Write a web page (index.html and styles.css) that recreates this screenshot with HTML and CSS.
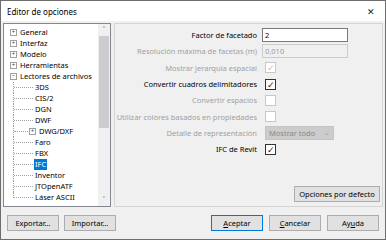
FILE: index.html
```html
<!DOCTYPE html>
<html>
<head>
<meta charset="utf-8">
<link rel="stylesheet" href="styles.css">
</head>
<body>
<div class="window">
  <div class="titlebar">
    <span class="title">Editor de opciones</span>
    <span class="close">✕</span>
  </div>
  <div class="body">
    <div class="main">
      <div class="tree">
        <ul class="items">
          <li class="node"><span class="exp">+</span><span class="lbl">General</span></li>
          <li class="node"><span class="exp">+</span><span class="lbl">Interfaz</span></li>
          <li class="node"><span class="exp">+</span><span class="lbl">Modelo</span></li>
          <li class="node"><span class="exp">+</span><span class="lbl">Herramientas</span></li>
          <li class="node"><span class="exp">−</span><span class="lbl">Lectores de archivos</span></li>
          <li class="leaf"><span class="lbl">3DS</span></li>
          <li class="leaf"><span class="lbl">CIS/2</span></li>
          <li class="leaf"><span class="lbl">DGN</span></li>
          <li class="leaf"><span class="lbl">DWF</span></li>
          <li class="leaf sub"><span class="exp">+</span><span class="lbl">DWG/DXF</span></li>
          <li class="leaf"><span class="lbl">Faro</span></li>
          <li class="leaf"><span class="lbl">FBX</span></li>
          <li class="leaf"><span class="lbl sel">IFC</span></li>
          <li class="leaf"><span class="lbl">Inventor</span></li>
          <li class="leaf"><span class="lbl">JTOpenATF</span></li>
          <li class="leaf"><span class="lbl">Láser ASCII</span></li>
        </ul>
        <div class="scrollbar">
          <span class="arrow">˄</span>
          <div class="thumb"></div>
          <div class="track"></div>
          <span class="arrow">˅</span>
        </div>
      </div>
      <div class="panel">
        <div class="grid">
          <label class="l">Factor de facetado</label>
          <div class="c"><div class="input">2</div></div>
          <label class="l dis">Resolución máxima de facetas (m)</label>
          <div class="c"><div class="input disabled">0,010</div></div>
          <label class="l dis">Mostrar jerarquía espacial</label>
          <div class="c"><span class="cb dis checked">✓</span></div>
          <label class="l">Convertir cuadros delimitadores</label>
          <div class="c"><span class="cb checked">✓</span></div>
          <label class="l dis">Convertir espacios</label>
          <div class="c"><span class="cb dis"></span></div>
          <label class="l dis">Utilizar colores basados en propiedades</label>
          <div class="c"><span class="cb dis"></span></div>
          <label class="l dis">Detalle de representación</label>
          <div class="c"><div class="select">Mostrar todo<span class="caret">⌄</span></div></div>
          <label class="l">IFC de Revit</label>
          <div class="c"><span class="cb checked">✓</span></div>
        </div>
        <div class="panel-foot">
          <button class="btn wide">Opciones por defecto</button>
        </div>
      </div>
    </div>
    <div class="footer">
      <div class="group">
        <button class="btn">Exportar...</button>
        <button class="btn">Importar...</button>
      </div>
      <div class="group right">
        <button class="btn default"><u>A</u>ceptar</button>
        <button class="btn"><u>C</u>ancelar</button>
        <button class="btn">Ay<u>u</u>da</button>
      </div>
    </div>
  </div>
</div>
</body>
</html>
```
FILE: styles.css
```css
* { box-sizing: border-box; }
html, body { margin: 0; padding: 0; }
body {
  width: 386px;
  height: 240px;
  overflow: hidden;
  font-family: "Noto Sans", "Open Sans", sans-serif;
  font-size: 7.5px;
  color: #000;
}
.window {
  width: 386px;
  height: 240px;
  border: 1px solid #6d6d6d;
  display: flex;
  flex-direction: column;
  background: #f0f0f0;
}
.titlebar {
  height: 20px;
  background: #fff;
  display: flex;
  align-items: center;
  justify-content: space-between;
  padding: 0 10px 0 6px;
  flex: none;
}
.title { font-size: 8px; }
.close { font-size: 9px; color: #222; }
.body {
  flex: 1;
  display: flex;
  flex-direction: column;
  padding: 2px 2px 0 2px;
}
.main {
  display: flex;
  gap: 3px;
  height: 184px;
}
.tree {
  width: 108px;
  background: #fff;
  border: 1px solid #828790;
  display: flex;
  overflow: hidden;
}
.items {
  list-style: none;
  margin: 0;
  padding: 3px 0 0 0;
  flex: 1;
}
.items li {
  height: 11px;
  line-height: 11px;
  display: flex;
  align-items: center;
  white-space: nowrap;
  position: relative;
}
.node { padding-left: 6px; }
.exp {
  width: 7px;
  height: 7px;
  border: 1px solid #a0a0a0;
  font-size: 6px;
  line-height: 5px;
  text-align: center;
  color: #444;
  margin-right: 2px;
  background: #fff;
  flex: none;
}
.leaf { padding-left: 30px; }
.leaf::before {
  content: "";
  position: absolute;
  left: 9px;
  top: 0;
  bottom: 0;
  border-left: 1px dotted #a0a0a0;
}
.leaf::after {
  content: "";
  position: absolute;
  left: 10px;
  width: 19px;
  top: 5px;
  border-top: 1px dotted #a0a0a0;
}
.leaf:last-child::before { bottom: 5px; }
.leaf.sub { padding-left: 25px; }
.leaf.sub::after { width: 14px; }
.lbl { padding: 0 1px; }
.lbl.sel { background: #0078d7; color: #fff; }
.scrollbar {
  width: 12px;
  background: #f0f0f0;
  display: flex;
  flex-direction: column;
  flex: none;
}
.arrow {
  height: 12px;
  text-align: center;
  font-size: 8px;
  line-height: 12px;
  color: #606060;
}
.thumb {
  height: 92px;
  margin: 0 1px;
  background: #cdcdcd;
}
.track { flex: 1; }
.panel {
  flex: 1;
  border: 1px solid #d5d5d5;
  display: flex;
  flex-direction: column;
  justify-content: space-between;
  padding: 3px 0 4px 0;
}
.grid {
  display: grid;
  grid-template-columns: 142px 1fr;
  column-gap: 5px;
  grid-auto-rows: 16.3px;
  align-items: center;
}
.l { text-align: right; white-space: nowrap; }
.l.dis { color: #a0a0a0; }
.c { display: flex; align-items: center; }
.input {
  width: 86px;
  height: 14px;
  border: 1px solid #7a7a7a;
  background: #fff;
  padding: 0 2px;
  line-height: 12px;
}
.input.disabled {
  background: #f0f0f0;
  border-color: #cccccc;
  color: #9a9a9a;
}
.cb {
  width: 11px;
  height: 11px;
  border: 1px solid #333;
  background: #fff;
  margin-left: 3px;
  font-size: 9px;
  line-height: 9px;
  text-align: center;
  color: #222;
}
.cb.dis { border-color: #c8c8c8; color: #c0c0c0; }
.select {
  margin-left: 3px;
  width: 69px;
  height: 14px;
  background: #cccccc;
  border: 1px solid #c4c4c4;
  color: #888;
  padding: 0 3px;
  line-height: 12px;
  display: flex;
  justify-content: space-between;
}
.caret { color: #9a9a9a; font-size: 7px; }
.panel-foot {
  display: flex;
  justify-content: flex-end;
  padding-right: 2px;
}
.btn {
  font-family: inherit;
  font-size: 7.5px;
  height: 16px;
  padding: 0;
  width: 52px;
  background: #e1e1e1;
  border: 1px solid #adadad;
  color: #000;
}
.btn.wide { width: 86px; }
.btn.default { border-color: #0078d7; }
.footer {
  flex: 1;
  display: flex;
  justify-content: space-between;
  align-items: center;
  padding: 0 4px 0 4px;
}
.group { display: flex; gap: 5px; }
.group.right { gap: 6px; }
```
